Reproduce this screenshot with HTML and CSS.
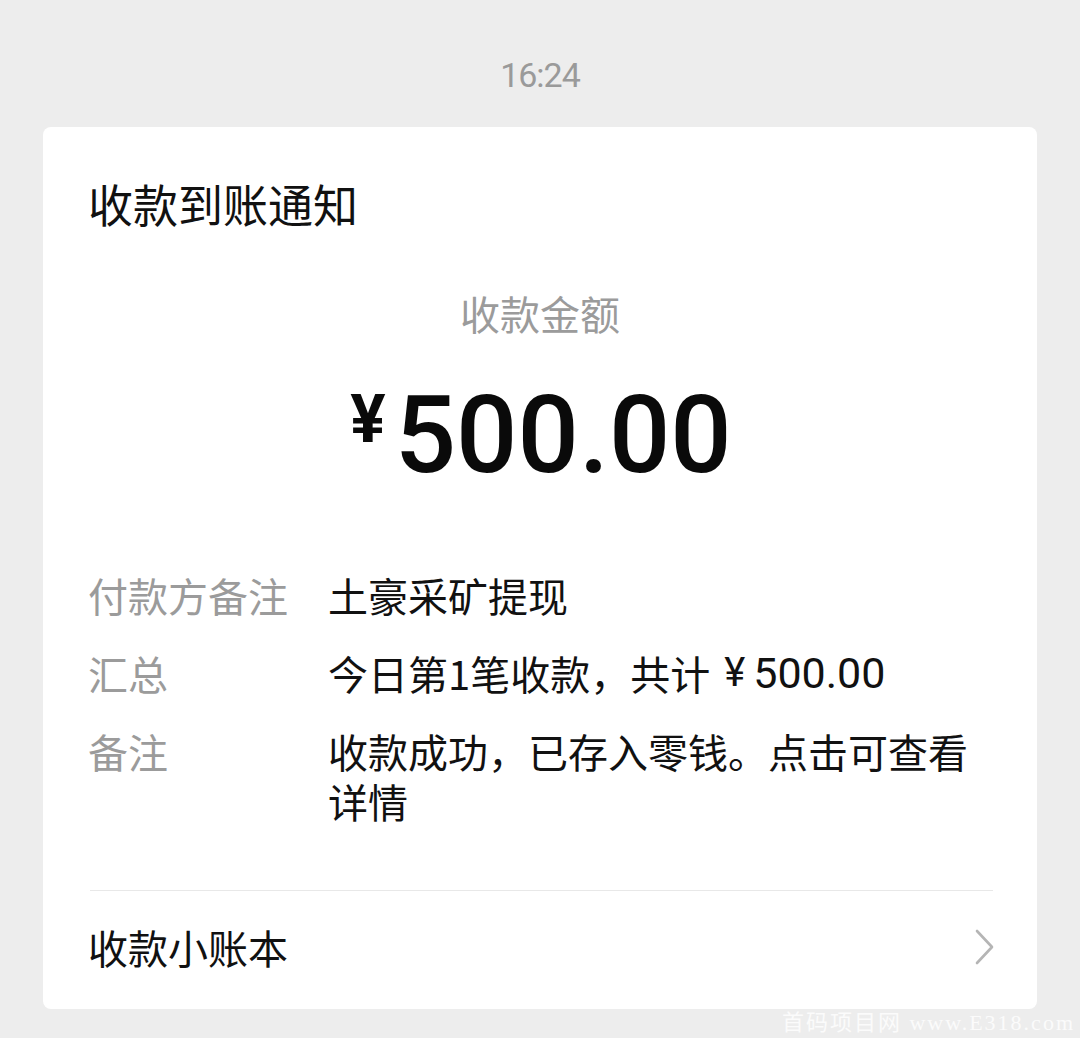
FILE: index.html
```html
<!DOCTYPE html>
<html lang="zh-CN">
<head>
<meta charset="utf-8">
<title>收款到账通知</title>
<link rel="stylesheet" href="styles.css">
</head>
<body>
<div class="time">16:24</div>
<div class="card">
  <div class="title">收款到账通知</div>
  <div class="sub">收款金额</div>
  <div class="amount"><span class="yen">¥</span><span class="num">500.00</span></div>
  <div class="rows">
    <div class="row"><div class="label">付款方备注</div><div class="value">土豪采矿提现</div></div>
    <div class="row"><div class="label">汇总</div><div class="value">今日第1笔收款，共计<span class="lat">¥</span><span class="lat2">500.00</span></div></div>
    <div class="row"><div class="label">备注</div><div class="value">收款成功，已存入零钱。点击可查看详情</div></div>
  </div>
  <div class="divider"></div>
  <div class="footer">
    <span class="footer-text">收款小账本</span>
    <svg class="chev" width="22" height="36" viewBox="0 0 22 36"><path d="M3 2 L18 18 L3 34" fill="none" stroke="#b5b5b5" stroke-width="2.6" stroke-linecap="round" stroke-linejoin="round"/></svg>
  </div>
</div>
<div class="watermark">首码项目网 www.E318.com</div>
</body>
</html>
```
FILE: styles.css
```css
* { box-sizing: border-box; }
html, body { margin: 0; padding: 0; }
body {
  background: #ededed;
  width: 1080px;
  height: 1038px;
  position: relative;
  overflow: hidden;
  padding-top: 57px;
  font-family: "Noto Sans CJK SC", "Noto Sans", sans-serif;
}
.time {
  text-align: center;
  font-family: Roboto, "Noto Sans", sans-serif;
  font-size: 34px;
  line-height: 36px;
  letter-spacing: -1px;
  color: #9a9a9a;
}
.card {
  margin: 34px 43px 0 43px;
  background: #fff;
  border-radius: 8px;
  padding: 54px 45px 37px 45px;
}
.title {
  font-size: 45px;
  line-height: 45px;
  color: #111;
}
.sub {
  margin-top: 67px;
  text-align: center;
  font-size: 40px;
  line-height: 40px;
  color: #9b9b9b;
}
.amount {
  margin-top: 48px;
  display: flex;
  justify-content: center;
  align-items: flex-start;
  color: #0a0a0a;
  font-family: Roboto, sans-serif;
  font-weight: 700;
}
.yen {
  font-size: 66px;
  line-height: 66px;
  margin-top: 6px;
  margin-right: 11px;
  position: relative;
  left: 2px;
}
.num {
  font-size: 108px;
  line-height: 108px;
  font-weight: 500;
}
.rows {
  margin-top: 81px;
  display: flex;
  flex-direction: column;
  gap: 28px;
}
.row {
  display: flex;
  font-size: 40px;
  line-height: 50px;
}
.label {
  width: 240px;
  flex: none;
  color: #9b9b9b;
}
.value {
  flex: 1;
  color: #111;
}
.lat, .lat2 {
  font-family: Roboto, sans-serif;
  line-height: 40px;
  display: inline-block;
  vertical-align: top;
  margin-top: 5px;
}
.lat {
  margin-left: 14px;
  margin-right: 8px;
}
.lat2 { font-size: 43px; }
.divider {
  margin-top: 64px;
  height: 1px;
  margin-left: 2px;
  margin-right: -1px;
  background: #e8e8e8;
}
.footer {
  padding-top: 31px;
  display: flex;
  justify-content: space-between;
  align-items: center;
  font-size: 40px;
  line-height: 50px;
  color: #111;
}
.chev { margin-right: -4px; }
.watermark {
  position: absolute;
  right: 5px;
  bottom: 2px;
  font-family: "Liberation Serif", "Noto Sans CJK SC", serif;
  font-size: 22px;
  letter-spacing: 2px;
  color: #fbfbfb;
}
```
